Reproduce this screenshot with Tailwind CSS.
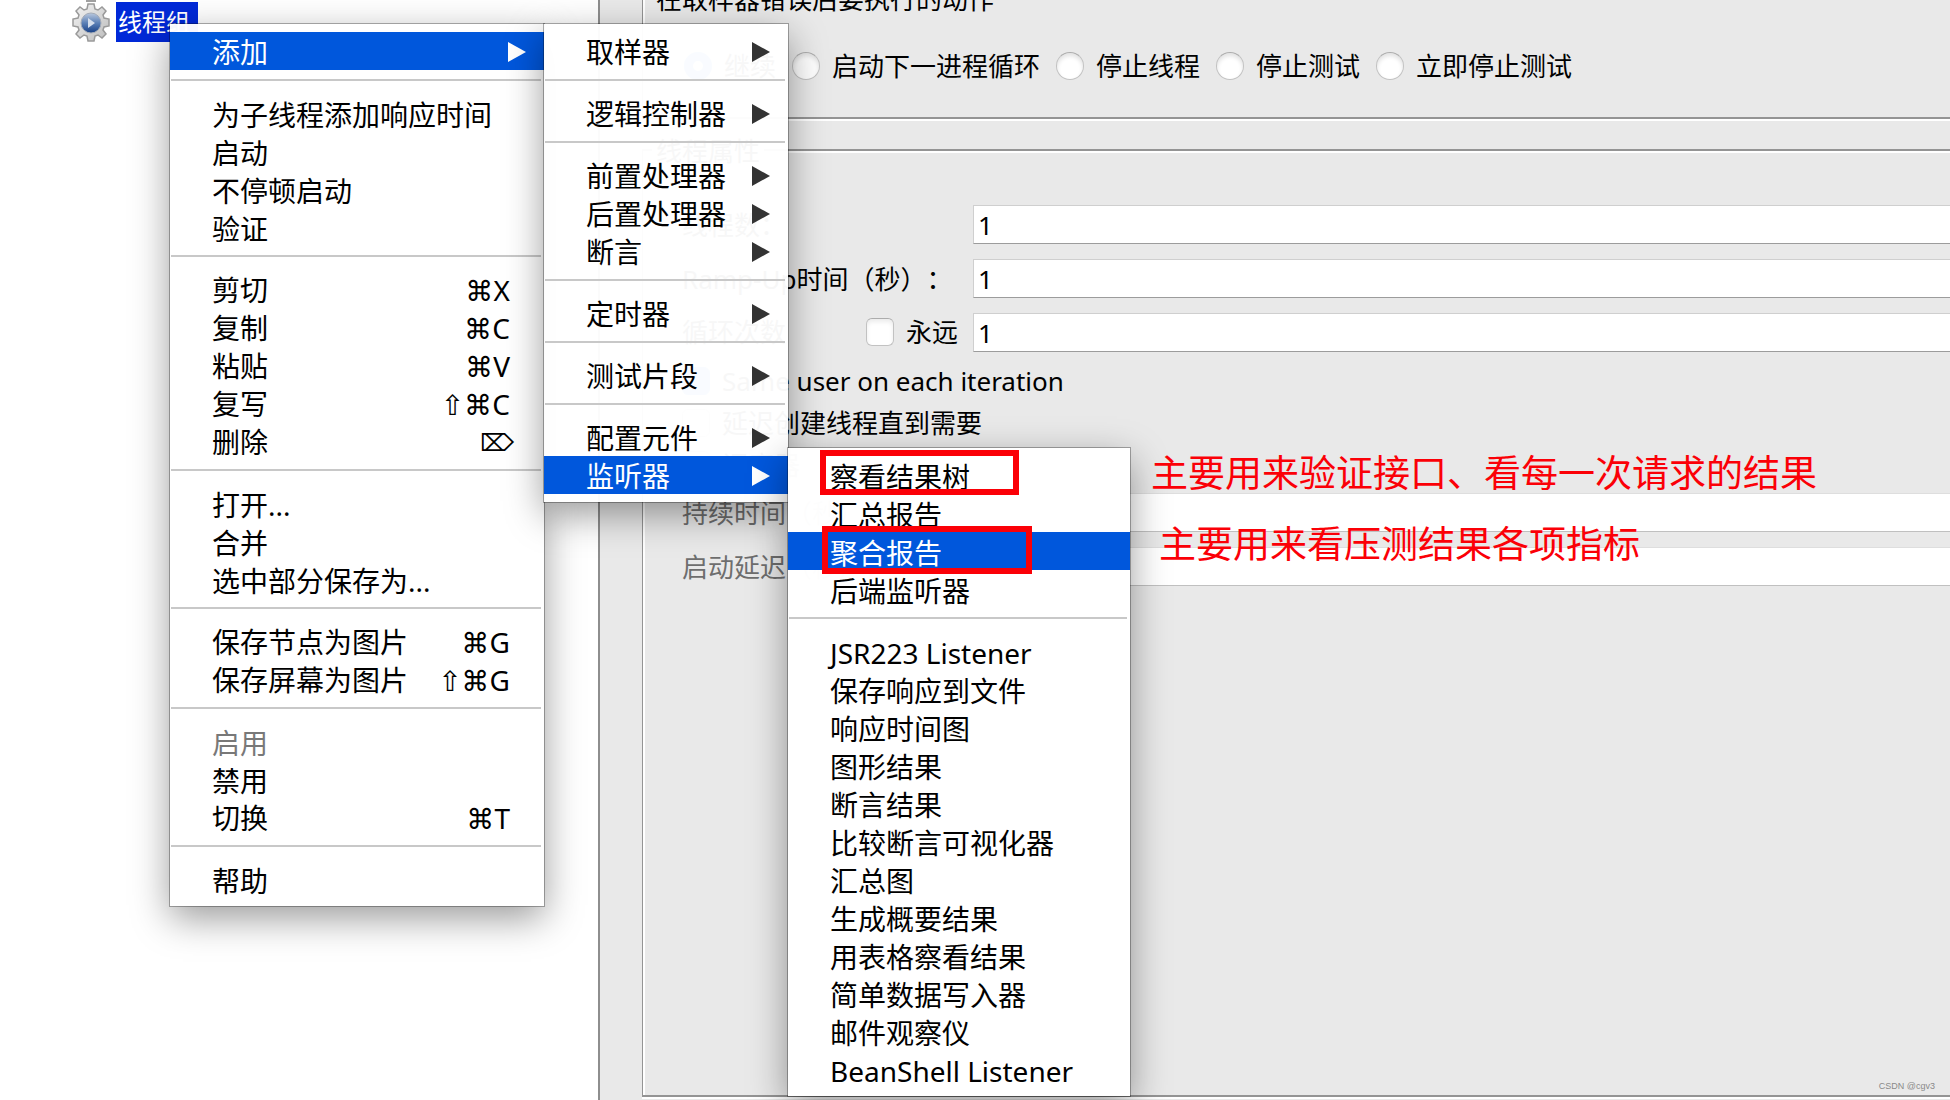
<!DOCTYPE html>
<html lang="zh-CN">

<head>
    <meta charset="UTF-8">
    <meta name="viewport" content="width=device-width, initial-scale=1.0">
    <title>线程组</title>
    <script src="https://cdn.jsdelivr.net/npm/@tailwindcss/browser@4"></script>
</head>

<body class="relative h-screen overflow-hidden bg-[#e9e9e9] font-['Noto_Sans','Noto_Sans_CJK_SC',sans-serif] text-[26px] leading-[38px] text-black [text-spacing-trim:space-all]">
    <div class="flex h-full">
        <!-- Tree -->
        <aside class="w-[600px] shrink-0 border-r-2 border-[#8e8e8e] bg-white pl-[72px]">
            <div class="flex items-start gap-1.5">
                <svg class="h-11 w-[38px] shrink-0" viewBox="0 0 38 44">
                    <defs>
                        <linearGradient id="metal" x1="0" y1="0" x2="1" y2="1">
                            <stop offset="0" stop-color="#f4f4f4" />
                            <stop offset="1" stop-color="#bcbcbc" />
                        </linearGradient>
                        <linearGradient id="ball" x1="0" y1="0" x2="0" y2="1">
                            <stop offset="0" stop-color="#b9c8de" />
                            <stop offset=".5" stop-color="#5c80b6" />
                            <stop offset="1" stop-color="#173f86" />
                        </linearGradient>
                    </defs>
                    <rect x="14" y="0" width="10" height="2" fill="#a0a0a0" />
                    <path d="M16 4h6l1 5 3 1 4-3 4 4-3 4 1 3 5 1v7l-5 1-1 3 3 4-4 4-4-3-3 1-1 5h-6l-1-5-3-1-4 3-4-4 3-4-1-3-5-1v-7l5-1 1-3-3-4 4-4 4 3 3-1z" fill="url(#metal)" stroke="#9a9a9a" stroke-width="1.5" />
                    <circle cx="19" cy="23" r="10" fill="url(#ball)" stroke="#a3abb8" />
                    <path d="M16 18l7 5-7 5z" fill="#d5deec" />
                </svg>
                <span class="mt-0.5 h-10 bg-[#0029d8] pr-2 pl-[2px] text-2xl leading-10 text-white">线程组</span>
            </div>
        </aside>

        <main class="-mt-5 flex h-[1117px] min-w-0 flex-1 flex-col pl-[42px]">
            <section class="h-[139px] shrink-0 border-b-2 border-l border-[#949494] pl-px shadow-[inset_2px_0_white,0_2px_white]">
                <h2 class="pl-3">在取样器错误后要执行的动作</h2>
                <div class="flex gap-4 pt-[29px] pl-10">
                    <label class="flex h-[38px] items-center gap-3"><input type="radio" name="action" checked class="size-7 appearance-none rounded-full border-[9px] border-[#3b8df5] bg-white">继续</label>
                    <label class="flex h-[38px] items-center gap-3"><input type="radio" name="action" class="size-7 appearance-none rounded-full border border-[#c2c2c2] border-t-[#acacac] bg-white shadow-[inset_0_3px_4px_#e2e2e2]">启动下一进程循环</label>
                    <label class="flex h-[38px] items-center gap-3"><input type="radio" name="action" class="size-7 appearance-none rounded-full border border-[#c2c2c2] border-t-[#acacac] bg-white shadow-[inset_0_3px_4px_#e2e2e2]">停止线程</label>
                    <label class="flex h-[38px] items-center gap-3"><input type="radio" name="action" class="size-7 appearance-none rounded-full border border-[#c2c2c2] border-t-[#acacac] bg-white shadow-[inset_0_3px_4px_#e2e2e2]">停止测试</label>
                    <label class="flex h-[38px] items-center gap-3"><input type="radio" name="action" class="size-7 appearance-none rounded-full border border-[#c2c2c2] border-t-[#acacac] bg-white shadow-[inset_0_3px_4px_#e2e2e2]">立即停止测试</label>
                </div>
            </section>

            <section class="mt-[30px] flex-1 border-y-2 border-l border-[#949494] pl-px shadow-[inset_2px_2px_white,0_2px_white]">
                <h2 class="-mt-[19px] ml-2 w-fit bg-[#e9e9e9] px-1">线程属性</h2>
                <div class="mt-[35px] flex flex-col gap-4 pl-[38px]">
                    <div class="flex h-[38px]">
                        <label for="threads" class="w-[291px]">线程数<span class="font-['Noto_Sans_CJK_TC',sans-serif]">：</span></label>
                        <input id="threads" value="1" class="h-[39px] min-w-0 flex-1 border border-r-0 border-[#cfcfcf] border-b-[#9c9c9c] bg-white px-1">
                    </div>
                    <div class="flex h-[38px]">
                        <label for="ramp" class="w-[291px]">Ramp-Up时间（秒）<span class="font-['Noto_Sans_CJK_TC',sans-serif]">：</span></label>
                        <input id="ramp" value="1" class="h-[39px] min-w-0 flex-1 border border-r-0 border-[#cfcfcf] border-b-[#9c9c9c] bg-white px-1">
                    </div>
                    <div class="flex h-[38px]">
                        <label for="loops" class="w-[184px]">循环次数</label>
                        <label class="flex w-[107px] items-center gap-3"><input type="checkbox" class="size-7 appearance-none rounded-md border border-[#c2c2c2] border-t-[#acacac] bg-white shadow-[inset_0_3px_4px_#ececec]">永远</label>
                        <input id="loops" value="1" class="h-[39px] min-w-0 flex-1 border border-r-0 border-[#cfcfcf] border-b-[#9c9c9c] bg-white px-1">
                    </div>
                </div>
                <div class="mt-[9px] flex flex-col pl-[38px] leading-[42px]">
                    <label class="flex items-center gap-3"><input type="checkbox" checked class="size-7 appearance-none rounded-md border border-[#3b8df5] bg-[#3b8df5]">Same user on each iteration</label>
                    <label class="flex items-center gap-3"><input type="checkbox" class="size-7 appearance-none rounded-md border border-[#c2c2c2] bg-white">延迟创建线程直到需要</label>
                    <label class="flex items-center gap-3"><input type="checkbox" class="size-7 appearance-none rounded-md border border-[#c2c2c2] bg-white">调度器</label>
                </div>
                <div class="mt-[7px] flex flex-col gap-4 pl-[38px] text-[#6e6e6e]">
                    <div class="flex h-[38px]">
                        <label for="duration" class="w-[291px]">持续时间（秒）<span class="font-['Noto_Sans_CJK_TC',sans-serif]">：</span></label>
                        <input id="duration" disabled class="h-[39px] min-w-0 flex-1 border border-r-0 border-[#dedede] border-b-[#c0c0c0] bg-white px-1">
                    </div>
                    <div class="flex h-[38px]">
                        <label for="delay" class="w-[291px]">启动延迟（秒）<span class="font-['Noto_Sans_CJK_TC',sans-serif]">：</span></label>
                        <input id="delay" disabled class="h-[39px] min-w-0 flex-1 border border-r-0 border-[#dedede] border-b-[#c0c0c0] bg-white px-1">
                    </div>
                </div>
            </section>
        </main>
    </div>

    <!-- Context menu -->
    <nav class="absolute top-6 left-[170px] flex w-[374px] flex-col bg-white/97 py-2 text-[28px] shadow-[0_0_0_1px_#0000004d,0_12px_36px_#00000066] [&>button]:items-center [&>button]:pt-0.5">
        <button class="flex h-[38px] justify-between bg-[#0057dc] pr-[18px] pl-[42px] text-white">添加<svg class="h-5 w-[18px]" viewBox="0 0 18 20"><path d="M0 0l18 10L0 20z" fill="currentColor" /></svg></button>
        <hr class="mt-[9px] mr-[3px] mb-[13px] ml-px border-t-2 border-[#c8c8c8]">
        <button class="h-[38px] pl-[42px] text-left">为子线程添加响应时间</button>
        <button class="h-[38px] pl-[42px] text-left">启动</button>
        <button class="h-[38px] pl-[42px] text-left">不停顿启动</button>
        <button class="h-[38px] pl-[42px] text-left">验证</button>
        <hr class="mt-[9px] mr-[3px] mb-[13px] ml-px border-t-2 border-[#c8c8c8]">
        <button class="flex h-[38px] justify-between pr-[34px] pl-[42px]">剪切<kbd class="font-['Noto_Sans','DejaVu_Sans']">⌘X</kbd></button>
        <button class="flex h-[38px] justify-between pr-[34px] pl-[42px]">复制<kbd class="font-['Noto_Sans','DejaVu_Sans']">⌘C</kbd></button>
        <button class="flex h-[38px] justify-between pr-[34px] pl-[42px]">粘贴<kbd class="font-['Noto_Sans','DejaVu_Sans']">⌘V</kbd></button>
        <button class="flex h-[38px] justify-between pr-[34px] pl-[42px]">复写<kbd class="font-['Noto_Sans','DejaVu_Sans']">⇧⌘C</kbd></button>
        <button class="flex h-[38px] justify-between pr-[30px] pl-[42px]">删除<kbd class="font-['Noto_Sans','DejaVu_Sans'] text-2xl">⌦</kbd></button>
        <hr class="mt-[9px] mr-[3px] mb-[13px] ml-px border-t-2 border-[#c8c8c8]">
        <button class="h-[38px] pl-[42px] text-left">打开...</button>
        <button class="h-[38px] pl-[42px] text-left">合并</button>
        <button class="h-[38px] pl-[42px] text-left">选中部分保存为...</button>
        <hr class="mt-[9px] mr-[3px] mb-[13px] ml-px border-t-2 border-[#c8c8c8]">
        <button class="flex h-[38px] justify-between pr-[34px] pl-[42px]">保存节点为图片<kbd class="font-['Noto_Sans','DejaVu_Sans']">⌘G</kbd></button>
        <button class="flex h-[38px] justify-between pr-[34px] pl-[42px]">保存屏幕为图片<kbd class="font-['Noto_Sans','DejaVu_Sans']">⇧⌘G</kbd></button>
        <hr class="mt-[9px] mr-[3px] mb-[13px] ml-px border-t-2 border-[#c8c8c8]">
        <button disabled class="h-[38px] pl-[42px] text-left text-[#787878]">启用</button>
        <button class="h-[38px] pl-[42px] text-left">禁用</button>
        <button class="flex h-[38px] justify-between pr-[34px] pl-[42px]">切换<kbd class="font-['Noto_Sans','DejaVu_Sans']">⌘T</kbd></button>
        <hr class="mt-[9px] mr-[3px] mb-[13px] ml-px border-t-2 border-[#c8c8c8]">
        <button class="h-[38px] pl-[42px] text-left">帮助</button>
    </nav>

    <!-- Submenu: 添加 -->
    <nav class="absolute top-6 left-[544px] flex w-[244px] flex-col bg-white/97 py-2 text-[28px] shadow-[0_0_0_1px_#0000004d,0_12px_36px_#00000066] [&>button]:items-center [&>button]:pt-0.5">
        <button class="flex h-[38px] justify-between pr-[18px] pl-[42px]">取样器<svg class="h-5 w-[18px] text-[#333]" viewBox="0 0 18 20"><path d="M0 0l18 10L0 20z" fill="currentColor" /></svg></button>
        <hr class="mt-[9px] mr-[3px] mb-[13px] ml-px border-t-2 border-[#c8c8c8]">
        <button class="flex h-[38px] justify-between pr-[18px] pl-[42px]">逻辑控制器<svg class="h-5 w-[18px] text-[#333]" viewBox="0 0 18 20"><path d="M0 0l18 10L0 20z" fill="currentColor" /></svg></button>
        <hr class="mt-[9px] mr-[3px] mb-[13px] ml-px border-t-2 border-[#c8c8c8]">
        <button class="flex h-[38px] justify-between pr-[18px] pl-[42px]">前置处理器<svg class="h-5 w-[18px] text-[#333]" viewBox="0 0 18 20"><path d="M0 0l18 10L0 20z" fill="currentColor" /></svg></button>
        <button class="flex h-[38px] justify-between pr-[18px] pl-[42px]">后置处理器<svg class="h-5 w-[18px] text-[#333]" viewBox="0 0 18 20"><path d="M0 0l18 10L0 20z" fill="currentColor" /></svg></button>
        <button class="flex h-[38px] justify-between pr-[18px] pl-[42px]">断言<svg class="h-5 w-[18px] text-[#333]" viewBox="0 0 18 20"><path d="M0 0l18 10L0 20z" fill="currentColor" /></svg></button>
        <hr class="mt-[9px] mr-[3px] mb-[13px] ml-px border-t-2 border-[#c8c8c8]">
        <button class="flex h-[38px] justify-between pr-[18px] pl-[42px]">定时器<svg class="h-5 w-[18px] text-[#333]" viewBox="0 0 18 20"><path d="M0 0l18 10L0 20z" fill="currentColor" /></svg></button>
        <hr class="mt-[9px] mr-[3px] mb-[13px] ml-px border-t-2 border-[#c8c8c8]">
        <button class="flex h-[38px] justify-between pr-[18px] pl-[42px]">测试片段<svg class="h-5 w-[18px] text-[#333]" viewBox="0 0 18 20"><path d="M0 0l18 10L0 20z" fill="currentColor" /></svg></button>
        <hr class="mt-[9px] mr-[3px] mb-[13px] ml-px border-t-2 border-[#c8c8c8]">
        <button class="flex h-[38px] justify-between pr-[18px] pl-[42px]">配置元件<svg class="h-5 w-[18px] text-[#333]" viewBox="0 0 18 20"><path d="M0 0l18 10L0 20z" fill="currentColor" /></svg></button>
        <button class="flex h-[38px] justify-between bg-[#0057dc] pr-[18px] pl-[42px] text-white">监听器<svg class="h-5 w-[18px]" viewBox="0 0 18 20"><path d="M0 0l18 10L0 20z" fill="currentColor" /></svg></button>
    </nav>

    <!-- Submenu: 监听器 -->
    <nav class="absolute top-[448px] left-[788px] flex w-[342px] flex-col bg-white/99 py-2 text-[28px] shadow-[0_0_0_1px_#0000004d,0_12px_36px_#00000066] [&>button]:pt-0.5">
        <button class="h-[38px] pl-[42px] text-left">察看结果树</button>
        <button class="h-[38px] pl-[42px] text-left">汇总报告</button>
        <button class="h-[38px] bg-[#0057dc] pl-[42px] text-left text-white">聚合报告</button>
        <button class="h-[38px] pl-[42px] text-left">后端监听器</button>
        <hr class="mt-[9px] mr-[3px] mb-[13px] ml-px border-t-2 border-[#c8c8c8]">
        <button class="h-[38px] pl-[42px] text-left">JSR223 Listener</button>
        <button class="h-[38px] pl-[42px] text-left">保存响应到文件</button>
        <button class="h-[38px] pl-[42px] text-left">响应时间图</button>
        <button class="h-[38px] pl-[42px] text-left">图形结果</button>
        <button class="h-[38px] pl-[42px] text-left">断言结果</button>
        <button class="h-[38px] pl-[42px] text-left">比较断言可视化器</button>
        <button class="h-[38px] pl-[42px] text-left">汇总图</button>
        <button class="h-[38px] pl-[42px] text-left">生成概要结果</button>
        <button class="h-[38px] pl-[42px] text-left">用表格察看结果</button>
        <button class="h-[38px] pl-[42px] text-left">简单数据写入器</button>
        <button class="h-[38px] pl-[42px] text-left">邮件观察仪</button>
        <button class="h-[38px] pl-[42px] text-left">BeanShell Listener</button>
    </nav>

    <!-- Red marks and notes -->
    <div class="absolute top-[450px] left-[820px] h-[45px] w-[199px] border-6 border-[#fb0007]"></div>
    <div class="absolute top-[526px] left-[822px] h-[48px] w-[210px] border-6 border-[#fb0007]"></div>
    <p class="absolute top-[449px] left-[1151px] text-[37px] leading-[48px] whitespace-nowrap text-[#fb0007]">主要用来验证接口、看每一次请求的结果</p>
    <p class="absolute top-[520px] left-[1159px] text-[37px] leading-[48px] whitespace-nowrap text-[#fb0007]">主要用来看压测结果各项指标</p>
    <p class="absolute right-[15px] bottom-1.5 font-['Liberation_Sans',sans-serif] text-[9px] leading-4 text-[#8a8a8a]">CSDN @cgv3</p>
</body>

</html>
